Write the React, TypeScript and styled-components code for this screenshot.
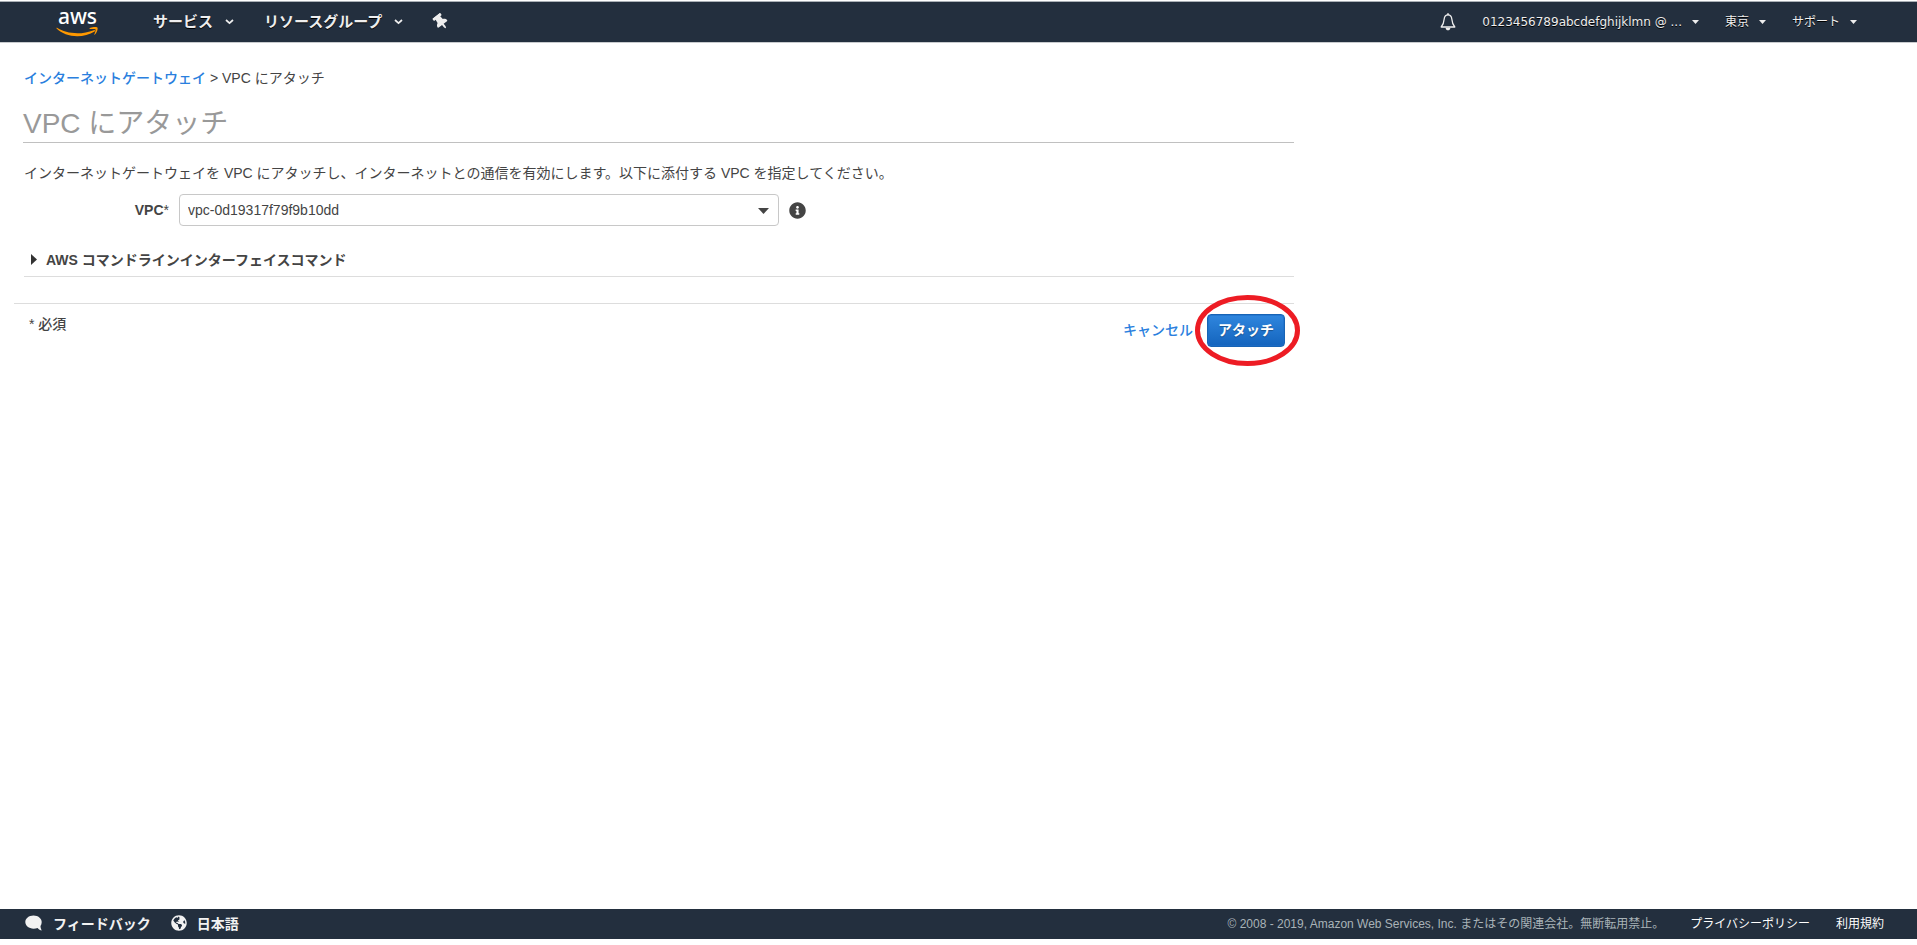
import React from "react";
import styled, { createGlobalStyle } from "styled-components";
import { FaGlobeAmericas, FaInfoCircle, FaThumbtack } from "react-icons/fa";

const sans = `"Liberation Sans", "Noto Sans CJK JP", sans-serif`;
const navSans = `"DejaVu Sans", "Noto Sans CJK JP", sans-serif`;
const jp = `"Noto Sans CJK JP", sans-serif`;

const GlobalStyle = createGlobalStyle`
  *, *::before, *::after { box-sizing: border-box; }
  body { margin: 0; background: #fff; color: #444; font: 14px/20px ${sans}; }
  button, select { font: inherit; color: inherit; }
  a { color: #2a7fde; text-decoration: none; }
`;

const Page = styled.div`
  display: flex;
  flex-direction: column;
  min-height: 100vh;
  padding: 1px 0 6px;
`;

const Header = styled.header`
  display: flex;
  align-items: center;
  justify-content: space-between;
  height: 42px;
  padding: 0 60px 0 56px;
  background: #232f3e;
  border-top: 1px solid #aab0b6;
  border-bottom: 1px solid #c8cbce;
`;

const NavGroup = styled.nav<{ $gap: number }>`
  display: flex;
  align-items: center;
  gap: ${(p) => p.$gap}px;
`;

const Logo = styled.a`
  display: flex;
  flex-direction: column;
  align-items: center;
  width: 43px;
  margin: 0 24px 2px 0;
  color: #fff;
  font: 500 21px/22px "Noto Sans", sans-serif;
`;

const NavButton = styled.button<{ $size: number; $bold?: boolean }>`
  display: flex;
  align-items: center;
  gap: ${(p) => (p.$bold ? 12 : 10)}px;
  padding: 0;
  border: 0;
  background: none;
  color: #eee;
  font: ${(p) => (p.$bold ? 700 : 400)} ${(p) => p.$size}px/20px ${navSans};
  text-shadow: 0 1px 0 #000;
  cursor: pointer;

  svg { display: block; }
`;

const PinIcon = styled(FaThumbtack)`
  transform: rotate(-38deg);
`;

const Main = styled.main`
  flex: 1;
  width: 100%;
  max-width: 1294px;
  padding: 25px 0 0 14px;
`;

const Section = styled.div`
  padding-left: 10px;
`;

const Breadcrumb = styled.nav`
  a { font-weight: 500; }
`;

const Title = styled.h1`
  margin: 14px 0 0 -1px;
  height: 41px;
  border-bottom: 1px solid #c0c0c0;
  color: #999;
  font: 400 28px/44px ${sans};
`;

const Description = styled.p`
  margin: 20px 0 11px;
`;

const Field = styled.div`
  display: flex;
  align-items: center;
  gap: 10px;
`;

const FieldLabel = styled.label`
  width: 145px;
  text-align: right;
  font-weight: 700;

  span { font-weight: 400; }
`;

const SelectBox = styled.div`
  position: relative;
  flex: 0 1 600px;

  svg {
    position: absolute;
    right: 10px;
    top: 14px;
    pointer-events: none;
  }
`;

const Select = styled.select`
  display: block;
  width: 100%;
  height: 32px;
  padding: 0 28px 0 8px;
  border: 1px solid #c8c8c8;
  border-radius: 4px;
  background: #fff;
  appearance: none;
`;

const InfoButton = styled.button`
  display: flex;
  padding: 0;
  border: 0;
  background: none;
  color: #444;
`;

const Expander = styled.button`
  display: flex;
  align-items: center;
  gap: 9px;
  width: 100%;
  height: 34px;
  margin-top: 17px;
  padding: 0 0 0 7px;
  border: 0;
  border-bottom: 1px solid #ddd;
  background: none;
  font-weight: 700;
  text-align: left;
`;

const Actions = styled.div`
  display: flex;
  justify-content: space-between;
  margin-top: 26px;
  padding: 10px 9px 0 15px;
  border-top: 1px solid #ddd;
`;

const Required = styled.span`
  font-weight: 500;
`;

const ButtonRow = styled.div`
  display: flex;
  align-items: center;
  gap: 14px;
`;

const CancelLink = styled.a`
  padding-bottom: 2px;
  font-weight: 500;
`;

const Highlighted = styled.div`
  position: relative;

  svg {
    position: absolute;
    left: -12px;
    top: -19px;
    pointer-events: none;
  }
`;

const PrimaryButton = styled.button`
  display: block;
  width: 78px;
  height: 33px;
  padding: 0 0 2px;
  border: 1px solid #1864b5;
  border-radius: 4px;
  background: linear-gradient(#2f86de, #1464bd);
  color: #fff;
  font-weight: 700;
  box-shadow: inset 0 0 0 1px rgba(30, 110, 200, 0.6);
  text-shadow: 0 1px 1px rgba(0, 0, 0, 0.3);
`;

const Footer = styled.footer`
  display: flex;
  align-items: center;
  justify-content: space-between;
  height: 30px;
  padding: 0 33px 0 25px;
  background: #232f3e;
`;

const FooterGroup = styled.div<{ $gap: number }>`
  display: flex;
  align-items: center;
  gap: ${(p) => p.$gap}px;
`;

const FooterButton = styled.button`
  display: flex;
  align-items: center;
  gap: 10px;
  padding: 0 0 2px;
  border: 0;
  background: none;
  color: #f2f2f2;
  font: 700 14px/20px ${jp};
`;

const Copyright = styled.span`
  color: #a9b3b8;
  font-size: 12px;
`;

const FooterLink = styled.a`
  color: #fff;
  font-size: 12px;
`;

const Chevron = () => (
  <svg width="9" height="6" viewBox="0 0 9 6" aria-hidden="true">
    <path d="M1 1l3.500 3.200L8 1" fill="none" stroke="#eee" strokeWidth="1.700" />
  </svg>
);

const Caret = ({ width = 7, height = 4, color = "#eee" }: { width?: number; height?: number; color?: string }) => (
  <svg width={width} height={height} viewBox="0 0 10 6" preserveAspectRatio="none" aria-hidden="true">
    <path d="M0 0h10L5 6z" fill={color} />
  </svg>
);

const Bell = () => (
  <svg width="16" height="18" viewBox="0 0 16 18" aria-hidden="true">
    <path
      d="M8 1.800c-2.400 0-3.600 1.700-3.800 4.200-.3 3.700-1 5.600-3 8h13.600c-2-2.400-2.700-4.300-3-8-.2-2.500-1.400-4.200-3.800-4.200z"
      fill="none"
      stroke="#eee"
      strokeWidth="1.300"
      strokeLinejoin="round"
    />
    <path d="M8 .2v2" stroke="#eee" strokeWidth="1.600" />
    <path d="M5.500 14.700h5c-.3 1.700-1.200 2.600-2.500 2.600s-2.200-.9-2.500-2.600z" fill="#eee" />
  </svg>
);

const Bubble = () => (
  <svg width="18" height="16" viewBox="0 0 18 16" aria-hidden="true">
    <path
      d="M8.500.5C3.900.5.300 3.400.300 7.100s3.600 6.600 8.200 6.600c1.500 0 2.900-.3 4.100-.8 1.100 1.300 2.700 2.200 4.100 2.500-.7-1.200-1.200-2.700-1.200-4.300.8-1.100 1.200-2.500 1.200-4C16.700 3.400 13.100.5 8.500.5z"
      fill="#f2f2f2"
    />
  </svg>
);

const Smile = () => (
  <svg width="43" height="10" viewBox="0 0 43 10" aria-hidden="true">
    <path d="M1 .8C10 6.700 25 8.300 37.800 3.200c1-.4 1.700.5.800 1.200C27 11.800 9 10.300.6 1.500c-.4-.5 0-.9.4-.7z" fill="#f90" />
    <path d="M33.500 1.400c2.300-1.700 7.200-1.800 7.900-.9.700.9-.2 5.200-2.600 7.200-.4.300-.7.200-.5-.3.600-1.500 1.700-4.400 1.200-5.100-.6-.6-3.800-.3-5.700-.3-.5 0-.6-.4-.3-.6z" fill="#f90" />
  </svg>
);

export default function App() {
  return (
    <>
      <GlobalStyle />
      <Page>
        <Header>
          <NavGroup $gap={30}>
            <Logo href="#">
              aws
              <Smile />
            </Logo>
            <NavButton $size={15} $bold>
              サービス
              <Chevron />
            </NavButton>
            <NavButton $size={15} $bold>
              リソースグループ
              <Chevron />
            </NavButton>
            <NavButton $size={15} aria-label="ピン留め">
              <PinIcon size={16} />
            </NavButton>
          </NavGroup>
          <NavGroup $gap={26}>
            <NavButton $size={12} aria-label="通知">
              <Bell />
            </NavButton>
            <NavButton $size={12}>
              0123456789abcdefghijklmn @ ...
              <Caret />
            </NavButton>
            <NavButton $size={12}>
              東京
              <Caret />
            </NavButton>
            <NavButton $size={12}>
              サポート
              <Caret />
            </NavButton>
          </NavGroup>
        </Header>

        <Main>
          <Section>
            <Breadcrumb>
              <a href="#">インターネットゲートウェイ</a> &gt; VPC にアタッチ
            </Breadcrumb>
            <Title>VPC にアタッチ</Title>
            <Description>
              インターネットゲートウェイを VPC にアタッチし、インターネットとの通信を有効にします。以下に添付する VPC を指定してください。
            </Description>
            <Field>
              <FieldLabel htmlFor="vpc">
                VPC<span>*</span>
              </FieldLabel>
              <SelectBox>
                <Select id="vpc" defaultValue="vpc-0d19317f79f9b10dd">
                  <option>vpc-0d19317f79f9b10dd</option>
                </Select>
                <Caret width={11} height={6} color="#444" />
              </SelectBox>
              <InfoButton aria-label="情報">
                <FaInfoCircle size={17} />
              </InfoButton>
            </Field>
            <Expander aria-expanded="false">
              <svg width="6" height="11" viewBox="0 0 6 11" aria-hidden="true">
                <path d="M0 0l6 5.500L0 11z" fill="#333" />
              </svg>
              AWS コマンドラインインターフェイスコマンド
            </Expander>
          </Section>
          <Actions>
            <Required>* 必須</Required>
            <ButtonRow>
              <CancelLink href="#">キャンセル</CancelLink>
              <Highlighted>
                <PrimaryButton>アタッチ</PrimaryButton>
                <svg width="105" height="71" viewBox="0 0 105 71" aria-hidden="true">
                  <ellipse cx="52.500" cy="35.500" rx="50" ry="33" fill="none" stroke="#ed1c24" strokeWidth="5" />
                </svg>
              </Highlighted>
            </ButtonRow>
          </Actions>
        </Main>

        <Footer>
          <FooterGroup $gap={20}>
            <FooterButton>
              <Bubble />
              フィードバック
            </FooterButton>
            <FooterButton>
              <FaGlobeAmericas size={16} />
              日本語
            </FooterButton>
          </FooterGroup>
          <FooterGroup $gap={26}>
            <Copyright>© 2008 - 2019, Amazon Web Services, Inc. またはその関連会社。無断転用禁止。</Copyright>
            <FooterLink href="#">プライバシーポリシー</FooterLink>
            <FooterLink href="#">利用規約</FooterLink>
          </FooterGroup>
        </Footer>
      </Page>
    </>
  );
}
